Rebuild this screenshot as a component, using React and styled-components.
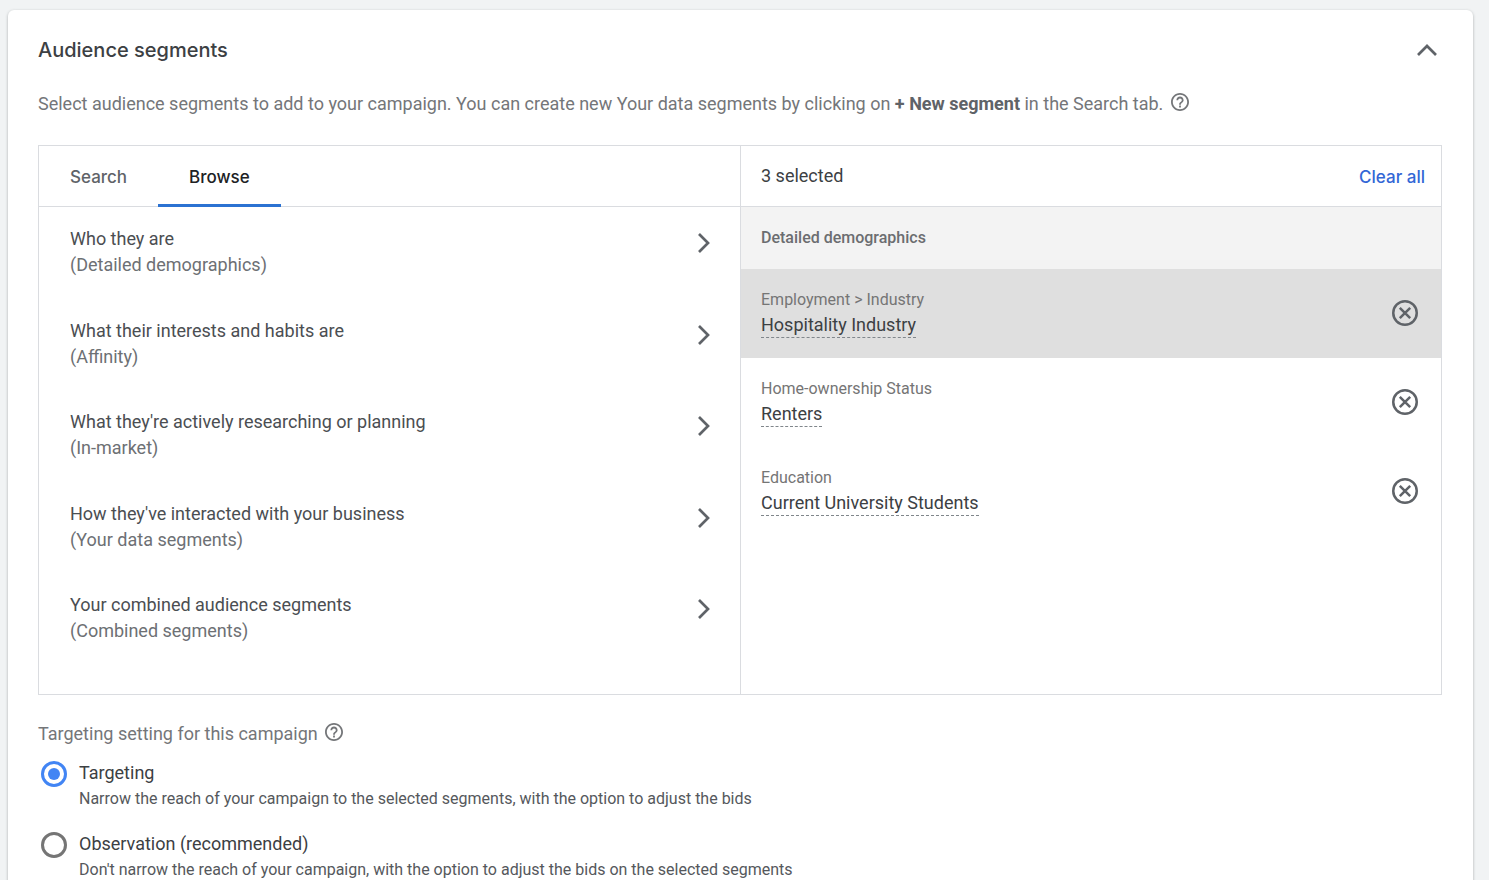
import React, { useState } from "react";
import styled, { createGlobalStyle } from "styled-components";

const GlobalStyle = createGlobalStyle`
  * {
    box-sizing: border-box;
  }
  body {
    margin: 0;
    background-color: #f1f3f4;
    color: #3c4043;
    font-family: Roboto, "Liberation Sans", sans-serif;
    font-size: 18px;
    line-height: 26px;
  }
  button {
    padding: 0;
    border: none;
    background: none;
    color: inherit;
    font: inherit;
    text-align: left;
    cursor: pointer;
  }
`;

const Page = styled.main`
  padding: 10px 16px 10px 8px;
`;

const Card = styled.section`
  padding: 25px 31px 24px 30px;
  border-radius: 6px;
  background-color: #fff;
  box-shadow: 0 1px 3px rgba(60, 64, 67, 0.4);
`;

const CardHeader = styled.header`
  display: flex;
  align-items: center;
  justify-content: space-between;
  padding-right: 5px;
`;

const Title = styled.h2`
  margin: 0;
  color: #3c4043;
  font-family: Inter, "Open Sans", sans-serif;
  font-size: 20px;
  font-weight: 500;
  line-height: 30px;
`;

const IconButton = styled.button`
  display: flex;
  flex-shrink: 0;
  color: #5f6368;
`;

const Description = styled.p`
  display: flex;
  gap: 8px;
  margin: 26px 0 28px;
  color: #747679;

  b {
    color: #5f6368;
    font-weight: 700;
  }
`;

const HelpButton = styled(IconButton)`
  align-self: flex-start;
  padding-top: 2px;
  color: #747679;
`;

const Picker = styled.div`
  display: grid;
  grid-template-columns: 1fr 1fr;
  min-height: 550px;
  border: 1px solid #dadce0;
`;

const Column = styled.div`
  display: flex;
  flex-direction: column;

  & + & {
    border-left: 1px solid #dadce0;
  }
`;

const ColumnHeader = styled.div`
  display: flex;
  align-items: center;
  justify-content: space-between;
  height: 61px;
  padding: 0 16px 0 20px;
  border-bottom: 1px solid #dadce0;
  color: #3c4043;
`;

const Tabs = styled.div`
  display: flex;
  height: 61px;
  border-bottom: 1px solid #dadce0;
`;

const Tab = styled.button`
  height: 61px;
  padding: 4px 31px 0;
  border-bottom: 3px solid ${({ $active }) => ($active ? "#2b72d2" : "transparent")};
  color: ${({ $active }) => ($active ? "#202124" : "#5f6368")};
  font-family: Inter, "Open Sans", sans-serif;
  font-size: 17px;
  font-weight: 500;
`;

const ClearButton = styled.button`
  padding-top: 2px;
  color: #3367d6;
  font-family: Inter, "Open Sans", sans-serif;
  font-size: 17px;
  font-weight: 500;
`;

const CategoryList = styled.div`
  display: flex;
  flex: 1;
  flex-direction: column;
  justify-content: space-between;
  padding: 19px 30px 50px 31px;
`;

const Category = styled.button`
  display: flex;
  align-items: flex-start;
  justify-content: space-between;

  svg {
    margin-top: 7px;
    color: #5f6368;
  }
`;

const CategoryText = styled.span`
  display: flex;
  flex-direction: column;
  color: #4b4e52;

  small {
    color: #6d7074;
    font-size: 18px;
  }
`;

const GroupTitle = styled.h3`
  margin: 0;
  padding: 18px 20px;
  background-color: #f3f3f3;
  color: #6b6d70;
  font-size: 16px;
  font-weight: 500;
`;

const Segment = styled.div`
  display: flex;
  align-items: center;
  justify-content: space-between;
  padding: 19px 23px 20px 20px;
  background-color: ${({ $hovered }) => ($hovered ? "#dfdfdf" : "#fff")};
`;

const SegmentText = styled.div`
  display: flex;
  flex-direction: column;
  align-items: flex-start;
`;

const SegmentPath = styled.span`
  color: #757575;
  font-size: 16px;
  line-height: 24px;
`;

const SegmentName = styled.span`
  border-bottom: 1px dashed #80868b;
  color: #3c4043;
  line-height: 25px;
`;

const Settings = styled.fieldset`
  display: flex;
  flex-direction: column;
  gap: 19px;
  margin: 26px 0 0;
  padding: 0;
  border: none;
`;

const Legend = styled.legend`
  display: flex;
  gap: 7px;
  margin-bottom: 13px;
  padding: 0;
  color: #747679;
`;

const Option = styled.label`
  display: flex;
  gap: 12px;
  padding-left: 3px;
`;

const Radio = styled.input`
  flex-shrink: 0;
  width: 26px;
  height: 26px;
  margin: 1px 0 0;
  padding: 4px;
  border: 2px solid #757575;
  border-width: 3px;
  border-radius: 50%;
  appearance: none;

  &:checked {
    border-color: #4285f4;
    background-color: #4285f4;
    background-clip: content-box;
  }
`;

const OptionText = styled.span`
  display: flex;
  flex-direction: column;
  color: #3c4043;

  small {
    color: #55585c;
    font-size: 16px;
  }
`;

const categories = [
  { name: "Who they are", kind: "Detailed demographics" },
  { name: "What their interests and habits are", kind: "Affinity" },
  { name: "What they're actively researching or planning", kind: "In-market" },
  { name: "How they've interacted with your business", kind: "Your data segments" },
  { name: "Your combined audience segments", kind: "Combined segments" },
];

const segments = [
  { path: "Employment > Industry", name: "Hospitality Industry", hovered: true },
  { path: "Home-ownership Status", name: "Renters" },
  { path: "Education", name: "Current University Students" },
];

const options = [
  {
    value: "targeting",
    label: "Targeting",
    hint: "Narrow the reach of your campaign to the selected segments, with the option to adjust the bids",
  },
  {
    value: "observation",
    label: "Observation (recommended)",
    hint: "Don't narrow the reach of your campaign, with the option to adjust the bids on the selected segments",
  },
];

function ChevronUp() {
  return (
    <svg width="20" height="12" viewBox="0 0 20 12" fill="none" stroke="currentColor" strokeWidth="2.7">
      <path d="M1 11l9-9 9 9" />
    </svg>
  );
}

function ChevronRight() {
  return (
    <svg width="12" height="20" viewBox="0 0 12 20" fill="none" stroke="currentColor" strokeWidth="2.7">
      <path d="M1 1l9 9-9 9" />
    </svg>
  );
}

function RemoveIcon() {
  return (
    <svg width="26" height="26" viewBox="0 0 26 26" fill="none" stroke="currentColor" strokeWidth="2.5">
      <circle cx="13" cy="13" r="11.75" />
      <path d="M7.8 7.8l10.4 10.4M18.2 7.8L7.8 18.2" />
    </svg>
  );
}

function Help() {
  return (
    <HelpButton type="button" aria-label="Help">
      <svg width="18" height="18" viewBox="2 2 20 20" fill="currentColor">
        <path d="M11 18h2v-2h-2v2zm1-16C6.48 2 2 6.48 2 12s4.48 10 10 10 10-4.48 10-10S17.52 2 12 2zm0 18c-4.41 0-8-3.59-8-8s3.59-8 8-8 8 3.59 8 8-3.59 8-8 8zm0-14c-2.21 0-4 1.79-4 4h2c0-1.1.9-2 2-2s2 .9 2 2c0 2-3 1.75-3 5h2c0-2.25 3-2.5 3-5 0-2.21-1.79-4-4-4z" />
      </svg>
    </HelpButton>
  );
}

function App() {
  const [tab, setTab] = useState("Browse");
  const [selected, setSelected] = useState(segments);
  const [setting, setSetting] = useState("targeting");

  function removeSegment(name) {
    setSelected(selected.filter((segment) => segment.name !== name));
  }

  return (
    <Page>
      <GlobalStyle />
      <Card>
        <CardHeader>
          <Title>Audience segments</Title>
          <IconButton type="button" aria-label="Collapse">
            <ChevronUp />
          </IconButton>
        </CardHeader>
        <Description>
          <span>
            Select audience segments to add to your campaign. You can create new Your data segments by
            clicking on <b>+ New segment</b> in the Search tab.
          </span>
          <Help />
        </Description>
        <Picker>
          <Column>
            <Tabs role="tablist">
              {["Search", "Browse"].map((name) => (
                <Tab
                  key={name}
                  type="button"
                  role="tab"
                  aria-selected={tab === name}
                  $active={tab === name}
                  onClick={() => setTab(name)}
                >
                  {name}
                </Tab>
              ))}
            </Tabs>
            <CategoryList>
              {categories.map(({ name, kind }) => (
                <Category key={name} type="button">
                  <CategoryText>
                    {name}
                    <small>({kind})</small>
                  </CategoryText>
                  <ChevronRight />
                </Category>
              ))}
            </CategoryList>
          </Column>
          <Column>
            <ColumnHeader>
              <span>{selected.length} selected</span>
              <ClearButton type="button" onClick={() => setSelected([])}>
                Clear all
              </ClearButton>
            </ColumnHeader>
            <GroupTitle>Detailed demographics</GroupTitle>
            {selected.map(({ path, name, hovered }) => (
              <Segment key={name} $hovered={hovered}>
                <SegmentText>
                  <SegmentPath>{path}</SegmentPath>
                  <SegmentName>{name}</SegmentName>
                </SegmentText>
                <IconButton type="button" aria-label={`Remove ${name}`} onClick={() => removeSegment(name)}>
                  <RemoveIcon />
                </IconButton>
              </Segment>
            ))}
          </Column>
        </Picker>
        <Settings>
          <Legend>
            Targeting setting for this campaign
            <Help />
          </Legend>
          {options.map(({ value, label, hint }) => (
            <Option key={value}>
              <Radio
                type="radio"
                name="setting"
                value={value}
                checked={setting === value}
                onChange={() => setSetting(value)}
              />
              <OptionText>
                {label}
                <small>{hint}</small>
              </OptionText>
            </Option>
          ))}
        </Settings>
      </Card>
    </Page>
  );
}

export default App;
